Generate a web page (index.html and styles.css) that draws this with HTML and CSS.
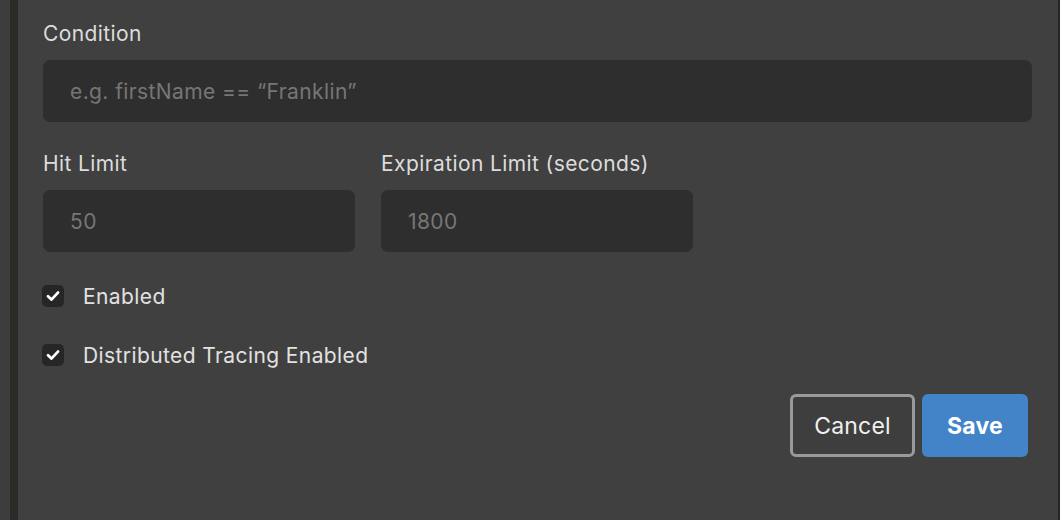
FILE: index.html
```html
<!DOCTYPE html>
<html>
<head>
<meta charset="utf-8">
<link rel="stylesheet" href="styles.css">
</head>
<body>
<div class="page">
  <div class="gutter"></div>
  <div class="rail"></div>
  <div class="panel">
    <div class="field">
      <label class="label">Condition</label>
      <div class="input"><span class="ph">e.g. firstName == “Franklin”</span></div>
    </div>
    <div class="row2">
      <div class="field small">
        <label class="label">Hit Limit</label>
        <div class="input"><span class="ph">50</span></div>
      </div>
      <div class="field small">
        <label class="label">Expiration Limit (seconds)</label>
        <div class="input"><span class="ph">1800</span></div>
      </div>
    </div>
    <div class="check first">
      <span class="box"><svg width="14" height="12" viewBox="0 0 14 12"><path d="M2 6.3 L5.4 9.6 L12 2.6" fill="none" stroke="#fff" stroke-width="2.8" stroke-linecap="round" stroke-linejoin="round"/></svg></span>
      <span class="clabel">Enabled</span>
    </div>
    <div class="check second">
      <span class="box"><svg width="14" height="12" viewBox="0 0 14 12"><path d="M2 6.3 L5.4 9.6 L12 2.6" fill="none" stroke="#fff" stroke-width="2.8" stroke-linecap="round" stroke-linejoin="round"/></svg></span>
      <span class="clabel">Distributed Tracing Enabled</span>
    </div>
    <div class="actions">
      <button class="btn cancel">Cancel</button>
      <button class="btn save">Save</button>
    </div>
  </div>
  <div class="edge"></div>
</div>
</body>
</html>
```
FILE: styles.css
```css
html, body {
  margin: 0;
  padding: 0;
  background: #404040;
}
.page {
  display: flex;
  width: 1060px;
  height: 520px;
  font-family: Inter, "Noto Sans", sans-serif;
}
.gutter {
  width: 10px;
  background: #3d3d3d;
}
.rail {
  width: 8px;
  background: #2a2a26;
}
.edge {
  width: 2px;
  background: #262626;
}
.panel {
  flex: 1;
  background: #404040;
  padding: 22px 26px 0 25px;
  display: flex;
  flex-direction: column;
}
.field {
  display: flex;
  flex-direction: column;
}
.label {
  font-size: 21px;
  letter-spacing: 0.4px;
  line-height: 24px;
  color: #dcdcdc;
  margin-bottom: 14px;
}
.input {
  height: 62px;
  background: #2e2e2e;
  border-radius: 7px;
  display: flex;
  align-items: center;
  padding-left: 27px;
  box-sizing: border-box;
}
.ph {
  font-size: 21px;
  letter-spacing: 0.4px;
  color: #767676;
}
.row2 {
  display: flex;
  gap: 26px;
  margin-top: 30px;
}
.small {
  width: 312px;
}
.check {
  display: flex;
  align-items: center;
  height: 24px;
}
.check.first {
  margin-top: 32px;
}
.check.second {
  margin-top: 35px;
}
.box {
  width: 22px;
  height: 22px;
  border-radius: 5px;
  background: #262626;
  display: flex;
  align-items: center;
  justify-content: center;
  margin-left: -1px;
}
.clabel {
  margin-left: 19px;
  font-size: 21px;
  letter-spacing: 0.4px;
  color: #e2e2e2;
}
.actions {
  display: flex;
  justify-content: flex-end;
  gap: 7px;
  margin-top: 27px;
  padding-right: 4px;
}
.btn {
  height: 63px;
  border-radius: 6px;
  font-family: Inter, "Noto Sans", sans-serif;
  font-size: 23px;
  letter-spacing: 0.2px;
  box-sizing: border-box;
  cursor: pointer;
}
.cancel {
  width: 125px;
  background: #3e3e3e;
  border: 3px solid #9a9a9a;
  color: #f0f0f0;
}
.save {
  width: 106px;
  background: #4384c9;
  border: none;
  color: #fff;
  font-weight: 700;
}
```
